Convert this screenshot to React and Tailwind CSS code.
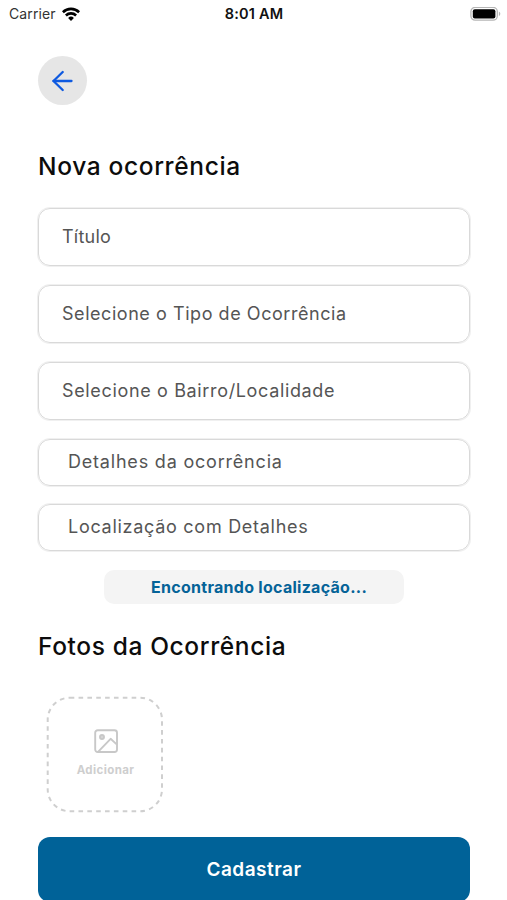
const fields = [
  { label: 'Título', tracking: 'tracking-[0.25px]' },
  { label: 'Selecione o Tipo de Ocorrência', tracking: 'tracking-[0.55px]' },
  { label: 'Selecione o Bairro/Localidade', tracking: 'tracking-[0.65px]' },
]

const details = [
  { label: 'Detalhes da ocorrência', tracking: 'tracking-[0.8px]' },
  { label: 'Localização com Detalhes', tracking: 'tracking-[0.72px]' },
]

function WifiIcon() {
  return (
    <svg className="w-[18px] h-[14px]" viewBox="0 0 18 14" fill="none" stroke="#000" strokeWidth="2.6">
      <path d="M0.9 5.2a11.6 11.6 0 0 1 16.2 0" />
      <path d="M3.9 8.5a7.3 7.3 0 0 1 10.2 0" />
      <path d="M9 13.9 6.1 11a4.2 4.2 0 0 1 5.8 0z" fill="#000" stroke="none" />
    </svg>
  )
}

function BatteryIcon() {
  return (
    <svg className="w-[31px] h-[15px]" viewBox="0 0 31 15" fill="none">
      <rect x="0.9" y="0.4" width="26.4" height="12.8" rx="4.2" stroke="#b5b5b5" strokeWidth="1.3" />
      <rect x="2.8" y="2.2" width="22.6" height="9.2" rx="2" fill="#000" />
      <path d="M28.9 4.5c1.9.8 1.9 3.8 0 4.6z" fill="#b5b5b5" />
    </svg>
  )
}

function BackIcon() {
  return (
    <svg className="w-[22px] h-[22px]" viewBox="0 0 22 22" fill="none" stroke="#0f5ae0" strokeWidth="2.3" strokeLinecap="round" strokeLinejoin="round">
      <path d="M19.5 11H1.5" />
      <path d="M10.7 2 1.5 11l9.2 9" />
    </svg>
  )
}

function PhotoIcon() {
  return (
    <svg className="w-6 h-6" viewBox="0 0 24 24" fill="none" stroke="#c8c8c8" strokeWidth="1.9" strokeLinejoin="round">
      <rect x="1.2" y="1.2" width="21.8" height="21.8" rx="2.5" />
      <circle cx="8" cy="8" r="2" fill="#d8d8d8" />
      <path d="M4.3 22.6 16.6 9.8 23 15.6" />
    </svg>
  )
}

export default function App() {
  return (
    <div className="w-full h-[900px] overflow-hidden bg-white flex flex-col font-['Inter',sans-serif]">
      <header className="h-7 shrink-0 grid grid-cols-3 items-center pl-[9px] pr-[6px] text-[#111]">
        <div className="flex items-center gap-[6px]">
          <span className="text-[14px] leading-5 text-[#333] tracking-[0.1px]">Carrier</span>
          <WifiIcon />
        </div>
        <span className="text-center text-[14.5px] leading-5 font-semibold tracking-[0.2px] -ml-[2px]">8:01 AM</span>
        <div className="flex justify-end">
          <BatteryIcon />
        </div>
      </header>

      <main className="pl-[38px] pr-[37px] pt-7 flex flex-col">
        <button className="w-[49px] h-[49px] rounded-full bg-[#e6e6e6] flex items-center justify-center">
          <BackIcon />
        </button>

        <h1 className="mt-[43px] h-9 whitespace-nowrap text-[24.5px] leading-9 font-medium text-[#0c0c0c] tracking-[0.65px]">
          Nova ocorrência
        </h1>

        <div className="mt-6 flex flex-col gap-[19px]">
          {fields.map((field) => (
            <div key={field.label} className="h-[58px] rounded-[12px] border border-[#d9d9d9] shadow-[0_0_0_1px_#f0f0f0] pl-[23px] flex items-center">
              <span className={`whitespace-nowrap text-[18px] leading-7 text-[#555] ${field.tracking}`}>{field.label}</span>
            </div>
          ))}
        </div>

        <div className="mt-[19px] flex flex-col gap-[18px]">
          {details.map((field) => (
            <div key={field.label} className="h-[47px] rounded-[12px] border border-[#d9d9d9] shadow-[0_0_0_1px_#f0f0f0] pl-[29px] pb-[2px] flex items-center">
              <span className={`whitespace-nowrap text-[18px] leading-7 text-[#555] ${field.tracking}`}>{field.label}</span>
            </div>
          ))}
        </div>

        <div className="mt-[19px] ml-[66px] w-[300px] h-[34px] rounded-[10px] bg-[#f4f4f4] pl-[47px] flex items-center">
          <span className="whitespace-nowrap text-[16px] font-bold text-[#056398] tracking-[0.28px]">Encontrando localização...</span>
        </div>

        <h2 className="mt-6 h-9 whitespace-nowrap text-[24.5px] leading-9 font-medium text-[#0c0c0c] tracking-[0.62px]">
          Fotos da Ocorrência
        </h2>

        <button className="relative mt-[32px] ml-[8px] w-[118px] h-[117px] flex flex-col items-center pt-[33px] pl-px">
          <svg className="absolute inset-0 w-[118px] h-[117px]" viewBox="0 0 118 117" fill="none">
            <rect x="1.7" y="1.7" width="114.3" height="113.6" rx="22" stroke="#cfcfcf" strokeWidth="2" strokeDasharray="4.6 4.25" />
          </svg>
          <PhotoIcon />
          <span className="mt-[9px] text-[11.5px] leading-4 font-bold text-[#cecece] tracking-[0.4px]">Adicionar</span>
        </button>

        <button className="mt-6 h-[65px] rounded-[12px] bg-[#006298] flex items-center justify-center pt-px">
          <span className="text-[19px] leading-7 font-semibold text-white tracking-[0.5px]">Cadastrar</span>
        </button>
      </main>
    </div>
  )
}
